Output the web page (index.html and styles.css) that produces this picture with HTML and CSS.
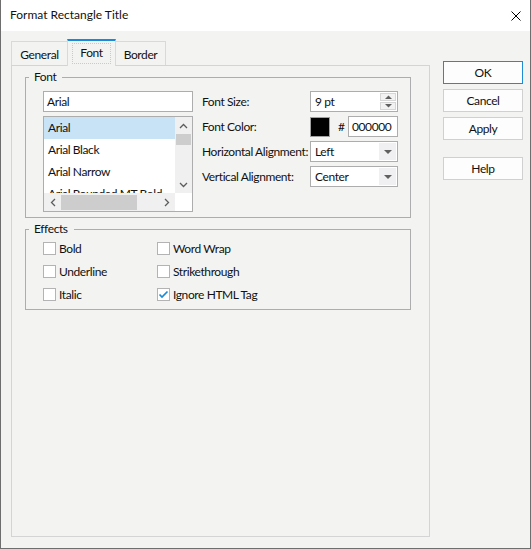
FILE: index.html
```html
<!DOCTYPE html>
<html>
<head>
<meta charset="utf-8">
<link rel="stylesheet" href="styles.css">
</head>
<body>
<div class="window">
  <div class="titlebar">
    <span class="title">Format Rectangle Title</span>
    <svg class="close" width="10" height="10" viewBox="0 0 10 10"><path d="M0.5 0.5L9.5 9.5M9.5 0.5L0.5 9.5" stroke="#000" stroke-width="1" fill="none"/></svg>
  </div>
  <div class="main">
    <div class="tabarea">
      <div class="tabs">
        <div class="tab tab-general">General</div>
        <div class="tab tab-font active"><span class="focus">Font</span></div>
        <div class="tab tab-border">Border</div>
      </div>
      <div class="panel">
        <fieldset class="group font-group">
          <legend>Font</legend>
          <div class="font-content">
            <div class="left-col">
              <div class="textbox">Arial</div>
              <div class="listbox">
                <div class="items">
                  <div class="item selected">Arial</div>
                  <div class="item">Arial Black</div>
                  <div class="item">Arial Narrow</div>
                  <div class="item">Arial Rounded MT Bold</div>
                </div>
                <div class="vscroll">
                  <div class="sbtn"><svg width="9" height="6" viewBox="0 0 9 6"><path d="M1 5L4.5 1.5L8 5" stroke="#5c5c5c" stroke-width="1.3" fill="none"/></svg></div>
                  <div class="vthumb"></div>
                  <div class="sfill"></div>
                  <div class="sbtn"><svg width="9" height="6" viewBox="0 0 9 6"><path d="M1 1L4.5 4.5L8 1" stroke="#5c5c5c" stroke-width="1.3" fill="none"/></svg></div>
                </div>
                <div class="hscroll">
                  <div class="sbtn"><svg width="6" height="9" viewBox="0 0 6 9"><path d="M5 1L1.5 4.5L5 8" stroke="#5c5c5c" stroke-width="1.3" fill="none"/></svg></div>
                  <div class="hthumb"></div>
                  <div class="sfill"></div>
                  <div class="sbtn"><svg width="6" height="9" viewBox="0 0 6 9"><path d="M1 1L4.5 4.5L1 8" stroke="#5c5c5c" stroke-width="1.3" fill="none"/></svg></div>
                </div>
                <div class="corner"></div>
              </div>
            </div>
            <div class="props">
              <div class="plabel">Font Size:</div>
              <div class="spin">
                <span class="val">9 pt</span>
                <div class="spinbtns">
                  <div class="spinbtn"><svg width="7" height="4" viewBox="0 0 7 4"><path d="M0 4L3.5 0.5L7 4Z" fill="#606060"/></svg></div>
                  <div class="spinbtn"><svg width="7" height="4" viewBox="0 0 7 4"><path d="M0 0L3.5 3.5L7 0Z" fill="#606060"/></svg></div>
                </div>
              </div>
              <div class="plabel">Font Color:</div>
              <div class="colorrow">
                <div class="swatch"></div>
                <span class="hash">#</span>
                <div class="hexbox">000000</div>
              </div>
              <div class="plabel">Horizontal Alignment:</div>
              <div class="combo"><span class="val">Left</span><div class="dropbtn"><span class="tri"></span></div></div>
              <div class="plabel">Vertical Alignment:</div>
              <div class="combo"><span class="val">Center</span><div class="dropbtn"><span class="tri"></span></div></div>
            </div>
          </div>
        </fieldset>
        <fieldset class="group effects-group">
          <legend>Effects</legend>
          <div class="effects">
            <label class="check"><span class="box"></span>Bold</label>
            <label class="check"><span class="box"></span>Word Wrap</label>
            <label class="check"><span class="box"></span>Underline</label>
            <label class="check"><span class="box"></span>Strikethrough</label>
            <label class="check"><span class="box"></span>Italic</label>
            <label class="check"><span class="box"><svg width="11" height="11" viewBox="0 0 11 11"><path d="M1.5 5.5L4 8L9.5 2.5" stroke="#1a8ad8" stroke-width="1.7" fill="none"/></svg></span>Ignore HTML Tag</label>
          </div>
        </fieldset>
      </div>
    </div>
    <div class="buttons">
      <div class="btn default">OK</div>
      <div class="btn">Cancel</div>
      <div class="btn">Apply</div>
      <div class="btn help">Help</div>
    </div>
  </div>
</div>
</body>
</html>
```
FILE: styles.css
```css
* { box-sizing: border-box; }
html, body { margin: 0; padding: 0; }
body {
  font-family: Lato, "Noto Sans", sans-serif;
  font-size: 12px;
  letter-spacing: -0.4px;
  color: #111;
  background: #fff;
}
.window {
  width: 531px;
  height: 549px;
  border: 1px solid #6e6e6e;
  border-top: none;
  background: #f3f4f1;
  display: flex;
  flex-direction: column;
}
.titlebar {
  height: 31px;
  flex: none;
  background: #fff;
  display: flex;
  align-items: center;
  justify-content: space-between;
  padding: 0 9px 0 9px;
}
.title { line-height: 16px; margin-top: -1px; letter-spacing: 0; }
.close { display: block; margin-top: 1px; }

.main {
  display: flex;
  gap: 13px;
  padding: 8px 7px 0 10px;
}
.tabarea { width: 419px; display: flex; flex-direction: column; }
.tabs { display: flex; align-items: flex-end; height: 26px; }
.tab {
  height: 24px;
  border: 1px solid #d9d9d9;
  border-bottom: none;
  display: flex;
  align-items: center;
  justify-content: center;
  line-height: 16px;
  padding-top: 2px;
}
.tab-general { width: 57px; }
.tab-font { width: 49px; margin-left: -1px; }
.tab-border { width: 51px; margin-left: -1px; }
.tab.active {
  height: 27px;
  margin-bottom: -1px;
  border-top: 2px solid #1a8ad8;
  background: #f3f4f1;
  position: relative;
  z-index: 1;
  padding-top: 0;
  align-items: flex-start;
}
.focus {
  margin-top: 2px;
  padding: 1px 7px 2px;
  border: 1px dotted #c3cbd3;
}
.panel {
  height: 472px;
  border: 1px solid #d4d4d4;
  padding: 3px 0 0 13px;
}

.group {
  width: 386px;
  margin: 0;
  padding: 0;
  border: 1px solid #adadad;
  min-width: 0;
}
.group legend {
  margin-left: 3px;
  padding: 0 6px 0 5px;
  line-height: 16px;
}
.effects-group { margin-top: 3px; }

.font-content {
  display: flex;
  gap: 9px;
  padding: 6px 12px 5px 17px;
}
.left-col { width: 150px; display: flex; flex-direction: column; gap: 4px; }
.textbox {
  height: 21px;
  border: 1px solid #adadad;
  background: #fff;
  padding-left: 3px;
  line-height: 19px;
}
.listbox {
  height: 96px;
  border: 1px solid #adadad;
  background: #fff;
  display: grid;
  grid-template-columns: 131px 17px;
  grid-template-rows: 76px 18px;
}
.items { overflow: hidden; }
.item { height: 22px; line-height: 22px; padding-left: 4px; white-space: nowrap; }
.item.selected { background: #c8e3f5; }
.vscroll { background: #f0f0f0; display: flex; flex-direction: column; }
.vscroll .sbtn { height: 17px; display: flex; align-items: center; justify-content: center; }
.vthumb { height: 11px; margin: 0 1px; background: #cdcdcd; }
.sfill { flex: 1; }
.hscroll { background: #f0f0f0; display: flex; align-items: center; }
.hscroll .sbtn { width: 17px; height: 18px; display: flex; align-items: center; justify-content: center; }
.hthumb { width: 76px; height: 15px; background: #cdcdcd; }
.corner { background: #fff; }
svg { display: block; }

.props {
  display: grid;
  grid-template-columns: 108px 88px;
  grid-auto-rows: 21px;
  row-gap: 4px;
}
.plabel { line-height: 21px; white-space: nowrap; }
.spin, .combo {
  border: 1px solid #adadad;
  background: #fff;
  display: flex;
  align-items: stretch;
}
.val { flex: 1; padding-left: 4px; line-height: 19px; }
.spinbtns { width: 16px; margin: 1px; display: flex; flex-direction: column; gap: 1px; }
.spinbtn {
  flex: 1;
  background: #f2f2f2;
  border: 1px solid #d6d6d6;
  display: flex;
  align-items: center;
  justify-content: center;
}
.colorrow { display: flex; align-items: center; }
.swatch { width: 20px; height: 20px; background: #000; border: 1px solid #a0a0a0; }
.hash { margin-left: 8px; width: 10px; }
.hexbox {
  width: 50px;
  height: 21px;
  border: 1px solid #adadad;
  background: #fff;
  padding-left: 3px;
  line-height: 19px;
  margin-top: -1px;
}
.dropbtn {
  width: 17px;
  margin: 1px;
  background: #f0eff1;
  display: flex;
  align-items: center;
  justify-content: center;
}
.tri {
  width: 0;
  height: 0;
  border-left: 4px solid transparent;
  border-right: 4px solid transparent;
  border-top: 4px solid #606060;
}

.effects {
  display: grid;
  grid-template-columns: 114px auto;
  grid-auto-rows: 23px;
  padding: 0 0 3px 17px;
}
.check { display: flex; align-items: center; gap: 3px; white-space: nowrap; }
.box {
  width: 13px;
  height: 13px;
  border: 1px solid #b3b3b3;
  background: #fff;
  display: flex;
  align-items: center;
  justify-content: center;
}

.buttons { width: 80px; padding-top: 22px; display: flex; flex-direction: column; gap: 5px; }
.btn {
  height: 23px;
  border: 1px solid #d0d0d0;
  background: #fdfdfd;
  text-align: center;
  line-height: 21px;
}
.btn.default { border-color: #1f8ad6; }
.btn.help { margin-top: 12px; }
```
